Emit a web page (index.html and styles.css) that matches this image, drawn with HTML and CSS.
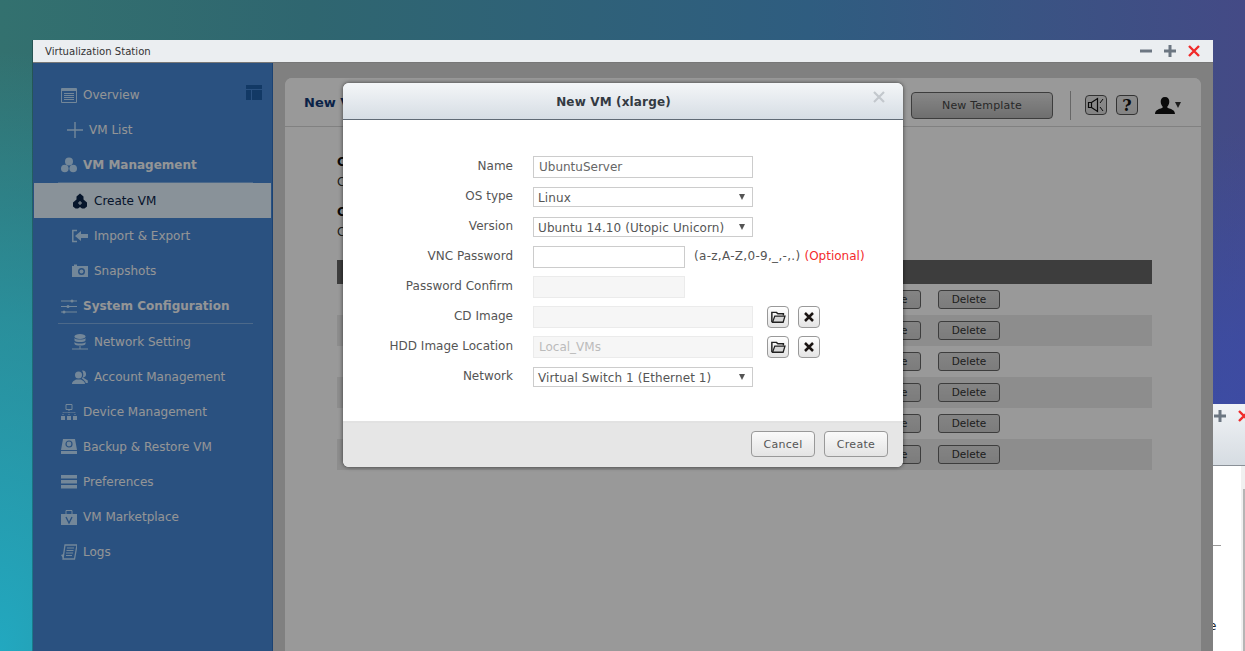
FILE: index.html
```html
<!DOCTYPE html>
<html lang="en">
<head>
<meta charset="utf-8">
<title>Virtualization Station</title>
<link rel="stylesheet" href="styles.css">
</head>
<body>
<div class="desktop">
  <section class="window back-window">
    <div class="back-title">
      <svg class="tb-icon" viewBox="0 0 12 12"><path d="M0 6h12M6 0v12" stroke="#6c7682" stroke-width="3"/></svg>
      <svg class="tb-icon close-gap" viewBox="0 0 12 12"><path d="M1 1l10 10M11 1L1 11" stroke="#f02a2a" stroke-width="2.4"/></svg>
    </div>
    <div class="back-body">
      <div class="back-dash"></div>
      <div class="back-line"></div>
      <span class="back-e">e</span>
    </div>
  </section>

  <section class="window main-window">
    <header class="titlebar">
      <span class="title-text">Virtualization Station</span>
      <div class="title-controls">
        <svg class="tb-icon" viewBox="0 0 12 12"><path d="M0 6h12" stroke="#6c7682" stroke-width="3"/></svg>
        <svg class="tb-icon" viewBox="0 0 12 12"><path d="M0 6h12M6 0v12" stroke="#6c7682" stroke-width="3"/></svg>
        <svg class="tb-icon" viewBox="0 0 12 12"><path d="M1 1l10 10M11 1L1 11" stroke="#f02a2a" stroke-width="2.4"/></svg>
      </div>
    </header>

    <div class="window-body">
      <nav class="sidebar">
        <svg class="collapse" viewBox="0 0 16 15"><path d="M0 0h16v4H0zM0 5h5v10H0zM6 5h10v10H6z" fill="#1f5fa8"/></svg>
        <a class="item l1">
          <svg class="ico" viewBox="0 0 16 16"><path d="M.5 1.500h15v14H.5z" fill="none" stroke="currentColor"/><path d="M1 2h14v2H1zM3 6h10v1H3zM3 8h10v1H3zM3 10h10v1H3zM3 12h10v1H3z"/></svg>
          Overview</a>
        <a class="item plus">
          <svg class="ico" viewBox="0 0 16 16"><path d="M0 8h16M8 0v16" stroke="currentColor" stroke-width="1.4"/></svg>
          VM List</a>
        <a class="item l1 strong">
          <svg class="ico" viewBox="0 0 16 16"><circle cx="8" cy="4.500" r="4"/><circle cx="3.800" cy="11.500" r="3.800"/><circle cx="12.200" cy="11.500" r="3.800"/></svg>
          VM Management</a>
        <div class="rule"></div>
        <a class="item l2 selected">
          <svg class="ico" viewBox="0 0 16 16"><path d="M8 .5l3.500 3v3l3.500 3v4l-2.500 2h-2.500L8 14l-2 1.500H3.500L1 13.500v-4l3.500-3v-3z"/><path d="M6 10h4M8 8v4" stroke="#e4f3ff"/></svg>
          Create VM</a>
        <a class="item l2">
          <svg class="ico" viewBox="0 0 16 16"><path d="M5 2.500H.8v11H5" fill="none" stroke="currentColor" stroke-width="1.5"/><path d="M3 8l6-5v3h7v4H9v3z"/></svg>
          Import &amp; Export</a>
        <a class="item l2">
          <svg class="ico" viewBox="0 0 16 16"><path d="M0 3h2V1.500h3V3h11v11H0z"/><circle cx="9.500" cy="8.500" r="3.500" fill="#4687d5"/><circle cx="9.500" cy="8.500" r="2"/></svg>
          Snapshots</a>
        <a class="item l1 strong">
          <svg class="ico" viewBox="0 0 16 16"><path d="M0 3h16M0 8.500h16M0 14h16" stroke="currentColor"/><circle cx="11" cy="3" r="1.500"/><circle cx="7" cy="8.500" r="1.500"/><circle cx="3" cy="14" r="1.500"/></svg>
          System Configuration</a>
        <div class="rule"></div>
        <a class="item l2">
          <svg class="ico" viewBox="0 0 16 16"><ellipse cx="8" cy="2.500" rx="5.500" ry="2.500"/><path d="M2.500 4c1 2 10 2 11 0v2.500c-1 2-10 2-11 0zM2.500 8c1 2 10 2 11 0v2c-1 2-10 2-11 0zM7.500 12h1v2.500h7.500v1H0v-1h7.500z"/></svg>
          Network Setting</a>
        <a class="item l2">
          <svg class="ico" viewBox="0 0 16 16"><circle cx="6.500" cy="6" r="3.500"/><path d="M0 15c0-3 3-3.500 4-4.500h5c1 1 4 1.500 4 4.500z"/><path d="M10 1.500a3.500 3.500 0 0 1 1 7l4.800 3v2.500h-2c-.5-2-2.500-3.500-4-4.500 2-2 2-5.500.2-8z"/></svg>
          Account Management</a>
        <a class="item l1">
          <svg class="ico" viewBox="0 0 16 16"><path d="M5 .5h6v5H5z" fill="none" stroke="currentColor"/><path d="M0 12h4v4H0zM6 12h4v4H6zM12 12h4v4h-4z"/><path d="M8 6v6M2 11V8.500h12V11" fill="none" stroke="currentColor" stroke-dasharray="1 1"/></svg>
          Device Management</a>
        <a class="item l1">
          <svg class="ico" viewBox="0 0 16 16"><path d="M2 0h12l2 11H0zM0 12h16v3H0z"/><circle cx="8" cy="5" r="3" fill="none" stroke="#4687d5" stroke-width="1.200"/></svg>
          Backup &amp; Restore VM</a>
        <a class="item l1">
          <svg class="ico" viewBox="0 0 16 16"><path d="M0 1h16v3.500H0zM0 6h16v3.500H0zM0 11h16v3.500H0z"/></svg>
          Preferences</a>
        <a class="item l1">
          <svg class="ico" viewBox="0 0 16 16"><path d="M5 5V1.500h6V5" fill="none" stroke="currentColor"/><path d="M0 5h16v11H0z"/><path d="M5 8l3 6 3-6" fill="none" stroke="#4687d5" stroke-width="1.400"/></svg>
          VM Marketplace</a>
        <a class="item l1">
          <svg class="ico" viewBox="0 0 16 16"><path d="M4 1h12l-2.500 14H2z" fill="none" stroke="currentColor" stroke-width="1.300"/><path d="M6 4h7M5.500 6.500h7M5 9h7M5 11.500h6" stroke="currentColor"/><path d="M0 11l2.500-1v5z"/></svg>
          Logs</a>
      </nav>

      <main class="content">
        <div class="panel">
          <header class="panel-head">
            <h1 class="panel-title">New VM</h1>
            <button class="tmpl-btn">New Template</button>
            <div class="head-sep"></div>
            <button class="icon-btn"><svg viewBox="0 0 20 16" width="20" height="16"><path d="M2.500 5.500h3v5h-3zM5.500 5.500l6-4v13l-6-4" fill="none" stroke="#111" stroke-width="1.200"/><path d="M14 6l3-4M14 10l3 4" stroke="#111"/></svg></button>
            <button class="icon-btn help">?</button>
            <svg class="user" viewBox="0 0 20 17"><path d="M10 0c3 0 4.500 2 4.300 5-.2 2.500-1.300 4-2.300 5l1 1c3 1 7 2 7 6H0c0-4 4-5 7-6l1-1c-1-1-2.100-2.500-2.300-5C5.500 2 7 0 10 0z" fill="#111"/></svg>
            <span class="caret"></span>
          </header>
          <div class="panel-body">
            <h2 class="sec-title">Create VM</h2>
            <p class="sec-text">Choose a template</p>
            <h2 class="sec-title">Custom</h2>
            <p class="sec-text">Create a template</p>
            <div class="tbl">
              <div class="tbl-head"></div>
              <div class="tbl-row"><button class="row-btn">Create</button><button class="row-btn">Delete</button></div>
              <div class="tbl-row alt"><button class="row-btn">Create</button><button class="row-btn">Delete</button></div>
              <div class="tbl-row"><button class="row-btn">Create</button><button class="row-btn">Delete</button></div>
              <div class="tbl-row alt"><button class="row-btn">Create</button><button class="row-btn">Delete</button></div>
              <div class="tbl-row"><button class="row-btn">Create</button><button class="row-btn">Delete</button></div>
              <div class="tbl-row alt"><button class="row-btn">Create</button><button class="row-btn">Delete</button></div>
            </div>
          </div>
        </div>
      </main>
      <div class="dim"></div>
    </div>
  </section>

  <section class="modal">
    <header class="modal-head">
      New VM (xlarge)
      <svg class="modal-x" viewBox="0 0 12 12"><path d="M1 1l10 10M11 1L1 11" stroke="#c3c8cd" stroke-width="2.200"/></svg>
    </header>
    <div class="modal-body">
      <form class="form">
        <label class="lbl">Name</label>
        <div class="fld"><span class="input wide">UbuntuServer</span></div>

        <label class="lbl">OS type</label>
        <div class="fld"><span class="select">Linux<i class="arrow"></i></span></div>

        <label class="lbl">Version</label>
        <div class="fld"><span class="select">Ubuntu 14.10 (Utopic Unicorn)<i class="arrow"></i></span></div>

        <label class="lbl">VNC Password</label>
        <div class="fld"><span class="input short"></span><span class="hint">(a-z,A-Z,0-9,_,-,.) <em class="opt">(Optional)</em></span></div>

        <label class="lbl">Password Confirm</label>
        <div class="fld"><span class="input short off"></span></div>

        <label class="lbl">CD Image</label>
        <div class="fld">
          <span class="input wide off"></span>
          <button type="button" class="sq first"><svg viewBox="0 0 16 13" width="15" height="12"><path d="M.8 12V1.500h5l1.500 1.500h6v2" fill="none" stroke="#222" stroke-width="1.600"/><path d="M4 5.500h11l-2 6.700H1.500z" fill="#d8d8d8" stroke="#222" stroke-width="1.400"/></svg></button>
          <button type="button" class="sq"><svg viewBox="0 0 10 10" width="10" height="10"><path d="M1 1l8 8M9 1l-8 8" stroke="#1b1513" stroke-width="2.500"/></svg></button>
        </div>

        <label class="lbl">HDD Image Location</label>
        <div class="fld">
          <span class="input wide off">Local_VMs</span>
          <button type="button" class="sq first"><svg viewBox="0 0 16 13" width="15" height="12"><path d="M.8 12V1.500h5l1.500 1.500h6v2" fill="none" stroke="#222" stroke-width="1.600"/><path d="M4 5.500h11l-2 6.700H1.500z" fill="#d8d8d8" stroke="#222" stroke-width="1.400"/></svg></button>
          <button type="button" class="sq"><svg viewBox="0 0 10 10" width="10" height="10"><path d="M1 1l8 8M9 1l-8 8" stroke="#1b1513" stroke-width="2.500"/></svg></button>
        </div>

        <label class="lbl">Network</label>
        <div class="fld"><span class="select">Virtual Switch 1 (Ethernet 1)<i class="arrow"></i></span></div>
      </form>
    </div>
    <footer class="modal-foot">
      <button class="foot-btn">Cancel</button>
      <button class="foot-btn">Create</button>
    </footer>
  </section>
</div>
</body>
</html>
```
FILE: styles.css
```css
* { box-sizing: border-box; }
html, body { margin: 0; height: 100%; }
body { font-family: "DejaVu Sans", Verdana, sans-serif; font-size: 12px; overflow: hidden; }

.desktop {
  position: relative;
  width: 1245px;
  height: 651px;
  overflow: hidden;
  background:
    radial-gradient(ellipse 340px 600px at 0 100%, #22a8c0 0%, rgba(34,168,192,.55) 55%, rgba(34,168,192,0) 100%),
    radial-gradient(ellipse 500px 520px at 100% 100%, #3a4cb0 0%, rgba(58,76,176,.6) 60%, rgba(58,76,176,0) 100%),
    linear-gradient(90deg, #33716f 0%, #2f6670 25%, #2f5d80 65%, #444a86 100%);
}

.window { position: absolute; }

/* back window */
.back-window { left: 1213px; top: 404px; width: 60px; height: 247px; display: flex; flex-direction: column; }
.back-title {
  height: 62px;
  display: flex;
  align-items: flex-start;
  padding: 6px 0 0 1px;
  background: linear-gradient(#f1f3f6, #d6dce2);
  border-bottom: 1px solid #8a9097;
}
.back-title .close-gap { margin-left: 12px; }
.back-body { flex: 1; position: relative; background: #fff; }
.back-body::after { content: ""; position: absolute; left: 28px; top: 0; bottom: 0; width: 5px; background: #f0f0f0; }
.back-line { position: absolute; left: 30px; top: 23px; bottom: 0; width: 2px; background: #b5b5b5; z-index: 1; }
.back-dash { position: absolute; left: 0; top: 79px; width: 8px; height: 1px; background: #999; }
.back-e { position: absolute; left: -4px; top: 153px; font-size: 12px; color: #222; }

/* main window */
.main-window { left: 33px; top: 40px; width: 1180px; height: 611px; display: flex; flex-direction: column; box-shadow: -1px 0 0 rgba(0,0,0,.25); }
.titlebar {
  height: 23px;
  flex: none;
  display: flex;
  align-items: center;
  justify-content: space-between;
  padding: 0 13px 0 12px;
  background: #ebeef1;
  border-bottom: 1px solid #777;
}
.title-text { font-size: 10.100px; color: #333; }
.title-controls { display: flex; gap: 12px; }
.tb-icon { width: 12px; height: 12px; display: block; flex: none; }

.window-body { flex: 1; position: relative; display: flex; min-height: 0; }
.dim { position: absolute; inset: 0; background: rgba(0,0,0,.4); }

/* sidebar */
.sidebar {
  position: relative;
  flex: none;
  width: 240px;
  padding-top: 14px;
  background: #4687d5;
  border-right: 1px solid #2d6fc0;
  display: flex;
  flex-direction: column;
}
.collapse { position: absolute; left: 213px; top: 22px; width: 16px; height: 15px; }
.item {
  display: flex;
  align-items: center;
  height: 35px;
  flex: none;
  gap: 6px;
  color: #f6f8fb;
  font-size: 12px;
}
.item.l1 { padding-left: 28px; }
.item.plus { padding-left: 34px; }
.item.l2 { padding-left: 39px; }
.item.strong { font-weight: bold; font-size: 12px; }
.item.selected { margin: 0 1px; padding-left: 38px; background: #e4f3ff; color: #0b2448; }
.ico { width: 16px; height: 16px; flex: none; color: #c0e1ff; fill: currentColor; }
.selected .ico { color: #0b2448; }
.rule { height: 1px; margin: 0 19px 0 25px; flex: none; background: #7fb0e6; }

/* content */
.content { flex: 1; min-width: 0; padding: 15px 12px 0; background: #d5d5d5; }
.panel { height: 100%; border-radius: 7px 7px 0 0; background: #fff; overflow: hidden; }
.panel-head {
  height: 49px;
  display: flex;
  align-items: center;
  padding: 6px 20px 0 19px;
  border-bottom: 1px solid #d8d8d8;
  background: #fff;
}
.panel-title { margin: -6px auto 0 0; font-size: 13px; font-weight: bold; color: #123a78; }
.tmpl-btn {
  width: 142px; height: 27px; padding: 0;
  font: 11px "DejaVu Sans", sans-serif; letter-spacing: .2px; color: #444;
  background: linear-gradient(#e1e1e1, #b9b9b9);
  border: 1px solid #666; border-radius: 4px;
}
.head-sep { width: 1px; height: 29px; margin: 0 14px 0 17px; background: #aaa; }
.icon-btn {
  width: 22px; height: 20px; padding: 0; margin-right: 9px;
  display: flex; align-items: center; justify-content: center;
  background: linear-gradient(#e8e8e8, #dcdcdc); border: 1px solid #555; border-radius: 4px;
}
.icon-btn.help { font: bold 16px "DejaVu Serif", serif; color: #111; margin-right: 17px; }
.user { width: 20px; height: 17px; }
.caret { border-top: 6px solid #333; border-left: 3.500px solid transparent; border-right: 3.500px solid transparent; }

.panel-body { padding: 26px 49px 0 52px; }
.sec-title { margin: 0; height: 21px; line-height: 18px; font-size: 12px; font-weight: bold; color: #111; white-space: nowrap; }
.sec-text { margin: 0 0 13px; height: 16px; line-height: 16px; color: #333; white-space: nowrap; }
.tbl { margin-top: 20px; }
.tbl-head { height: 24px; background: #666; }
.tbl-row { height: 31px; display: flex; align-items: center; justify-content: flex-end; gap: 17px; padding: 0 152px 0 0; }
.tbl-row.alt { background: #ebebeb; }
.row-btn {
  width: 62px; height: 19px; padding: 0 0 2px;
  font: 10.500px "DejaVu Sans", sans-serif; color: #333;
  background: linear-gradient(#dcdcdc, #cfcfcf);
  border: 1px solid #666; border-radius: 3px;
}

/* modal */
.modal {
  position: absolute;
  left: 343px; top: 83px;
  width: 560px; height: 384px;
  display: flex; flex-direction: column;
  border-radius: 6px;
  overflow: hidden;
  background: #fff;
  box-shadow: 0 0 4px rgba(0,0,0,.6);
}
.modal-head {
  position: relative;
  height: 37px; flex: none;
  padding: 1px 19px 0 0;
  text-align: center;
  line-height: 36px;
  font-size: 12px; letter-spacing: .15px; font-weight: bold; color: #333a42;
  background: linear-gradient(#f4f6f8, #d6dde4);
  border-bottom: 1px solid #606a75;
}
.modal-x { position: absolute; right: 18px; top: 8px; width: 12px; height: 12px; }
.modal-body { flex: 1; padding-top: 36px; }
.form { display: grid; grid-template-columns: 170px 1fr; grid-auto-rows: 30px; column-gap: 20px; margin: 0; }
.lbl { text-align: right; line-height: 20px; color: #555; font-size: 12px; white-space: nowrap; }
.fld { display: flex; align-items: flex-start; }
.input {
  display: block; height: 22px; padding: 0 5px;
  line-height: 20px; color: #666; font-size: 12px;
  background: #fff; border: 1px solid #ccc;
}
.input.wide { width: 220px; }
.input.short { width: 152px; }
.input.off { background: #f6f6f6; border-color: #ebebeb; color: #bbb; }
.select {
  position: relative; display: block; width: 220px; height: 20px; margin-top: 1px; padding: 0 4px;
  line-height: 20px; color: #555; font-size: 12px; letter-spacing: .1px;
  background: #fff; border: 1px solid #ccc;
}
.arrow { position: absolute; right: 7px; top: 6px; border-top: 6px solid #555; border-left: 3px solid transparent; border-right: 3px solid transparent; }
.hint { margin-left: 9px; line-height: 20px; color: #555; font-size: 12px; letter-spacing: .3px; white-space: nowrap; }
.opt { font-style: normal; letter-spacing: 0; color: #f32b2b; }
.sq {
  width: 22px; height: 22px; padding: 0; margin-left: 9px;
  display: flex; align-items: center; justify-content: center;
  background: linear-gradient(#fff, #e4e4e4); border: 1px solid #999; border-radius: 4px;
}
.sq.first { margin-left: 14px; }
.modal-foot {
  height: 46px; flex: none;
  display: flex; align-items: center; justify-content: flex-end; gap: 9px;
  padding: 0 15px 2px 0;
  background: #e6e6e6;
  border-top: 2px solid #e2e2e2;
}
.foot-btn {
  width: 64px; height: 26px; padding: 0;
  font: 11px "DejaVu Sans", sans-serif; letter-spacing: .3px; color: #555;
  background: linear-gradient(#fafafa, #e4e4e4);
  border: 1px solid #999; border-radius: 4px;
}
```
